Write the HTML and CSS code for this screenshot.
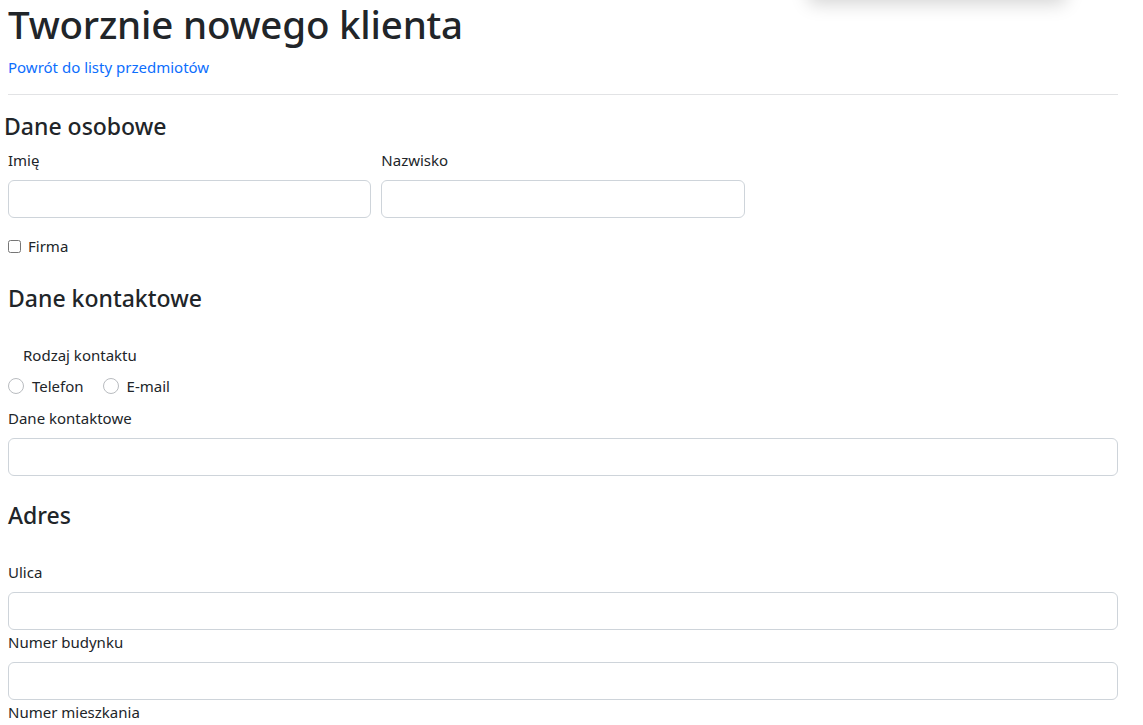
FILE: index.html
```html
<!DOCTYPE html>
<html lang="pl">
<head>
<meta charset="utf-8">
<title>Tworznie nowego klienta</title>
<link rel="stylesheet" href="styles.css">
</head>
<body>
<div class="menu-shadow"></div>
<main class="page">
  <h1 class="title">Tworznie nowego klienta</h1>
  <a class="back" href="#">Powrót do listy przedmiotów</a>
  <hr class="rule">

  <h4 class="section first">Dane osobowe</h4>
  <div class="cols">
    <div class="field">
      <label class="label">Imię</label>
      <input class="input" type="text">
    </div>
    <div class="field">
      <label class="label">Nazwisko</label>
      <input class="input" type="text">
    </div>
  </div>
  <div class="check-row">
    <input class="check" type="checkbox" id="firma">
    <label for="firma">Firma</label>
  </div>

  <h4 class="section contact">Dane kontaktowe</h4>
  <div class="label indent">Rodzaj kontaktu</div>
  <div class="radios">
    <span class="radio-item"><span class="radio"></span>Telefon</span>
    <span class="radio-item"><span class="radio"></span>E-mail</span>
  </div>
  <label class="label">Dane kontaktowe</label>
  <input class="input" type="text">

  <h4 class="section address">Adres</h4>
  <label class="label">Ulica</label>
  <input class="input tight" type="text">
  <label class="label">Numer budynku</label>
  <input class="input tight" type="text">
  <label class="label">Numer mieszkania</label>
  <input class="input tight" type="text">
</main>
</body>
</html>
```

FILE: styles.css
```css
* { box-sizing: border-box; }
html, body { margin: 0; padding: 0; background: #fff; }
body {
  font-family: "Noto Sans", "Open Sans", sans-serif;
  font-size: 15px;
  line-height: 24px;
  color: #212529;
  overflow: hidden;
}
.menu-shadow {
  position: absolute;
  top: -62px;
  left: 808px;
  width: 258px;
  height: 62px;
  background: #fff;
  border-radius: 6px;
  box-shadow: 0 4px 18px rgba(0, 0, 0, 0.17);
}
.page {
  width: 1126px;
  padding: 0 8px;
}
.title {
  margin: 0;
  font-size: 38.5px;
  font-weight: 500;
  line-height: 48px;
  letter-spacing: -0.2px;
}
.back {
  display: block;
  margin-top: 7px;
  color: #0d6efd;
  text-decoration: none;
  width: max-content;
}
.rule {
  margin: 15px 0 0;
  border: 0;
  border-top: 1px solid #e2e3e5;
  width: 1110px;
}
.section {
  margin: 0;
  font-size: 23px;
  font-weight: 500;
  line-height: 29px;
}
.section.first { margin: 17px 0 7px -4px; }
.section.contact { margin: 26px 0 30px; }
.section.address { margin: 25px 0 30px; }
.label { display: block; margin-bottom: 8px; }
.label.indent { padding-left: 15px; margin-bottom: 7px; }
.cols {
  display: grid;
  grid-template-columns: repeat(3, 1fr);
  column-gap: 10px;
  width: 1110px;
}
.input {
  display: block;
  width: 1110px;
  height: 38px;
  margin: 0 0 8px;
  padding: 6px 12px;
  border: 1px solid #ced4da;
  border-radius: 6px;
  background: #fff;
  font: inherit;
}
.cols .input { width: 100%; margin-bottom: 16px; }
.input.tight { margin-bottom: 0; }
.check-row {
  display: flex;
  align-items: center;
  height: 24px;
}
.check {
  width: 13px;
  height: 13px;
  margin: 0 7px 0 0;
}
.radios {
  display: flex;
  gap: 19px;
  height: 24px;
  align-items: center;
  margin-bottom: 8px;
}
.radio-item { display: inline-flex; align-items: center; }
.radio {
  width: 16px;
  height: 16px;
  border: 1px solid #b9bcc0;
  border-radius: 50%;
  margin-right: 8px;
  background: #fff;
}
```
